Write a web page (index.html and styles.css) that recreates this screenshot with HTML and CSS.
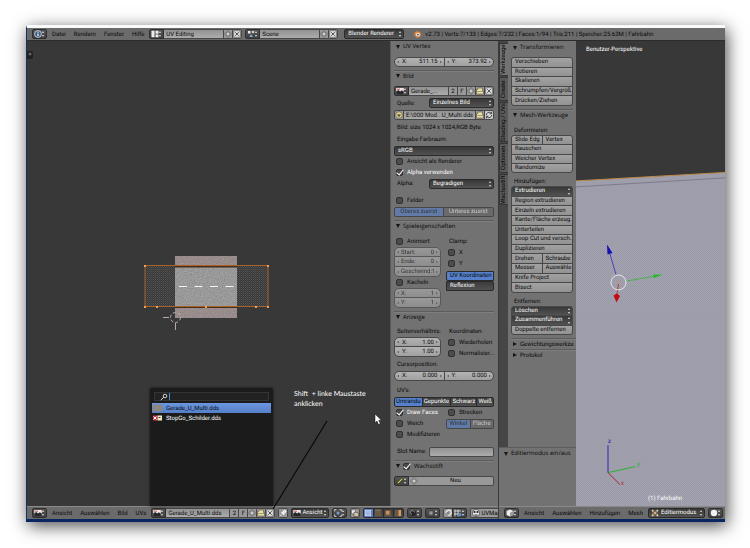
FILE: index.html
```html
<!DOCTYPE html>
<html lang="de">
<head>
    <meta charset="UTF-8">
    <meta name="viewport" content="width=device-width, initial-scale=1.0">
    <title>Blender - UV Editing</title>
    <link rel="stylesheet" href="styles.css">
</head>
<body>
    <!-- Icons -->
    <svg class="sprite" aria-hidden="true">
        <symbol id="i-info" viewBox="0 0 8 8"><circle cx="4" cy="4" r="3.4" fill="#3d5a80" stroke="#dde6f0" stroke-width=".8"/><path d="M4 3.6v2.4M4 1.8v1" stroke="#fff" stroke-width="1.2"/></symbol>
        <symbol id="i-layout" viewBox="0 0 8 8"><path d="M.5 .8h3v6.4h-3zM4.5 .8h3v3h-3zM4.5 4.6h3v2.6h-3z" fill="#eee"/></symbol>
        <symbol id="i-scene" viewBox="0 0 8 8"><path d="M1 1h2.5v2.5H1z" fill="#eee"/><circle cx="6" cy="2" r="1.3" fill="#c9d6b0"/><path d="M2.5 7l1.6-3 1.7 3z" fill="#7fb2e0"/></symbol>
        <symbol id="i-image" viewBox="0 0 8 8"><path d="M.2 1h7.6v6H.2z" fill="#f1e4e2"/><path d="M.2 4.6l2-1.6 2 1.4 1.6-1.2 2 1.6V7H.2z" fill="#26262c"/><path d="M1 2.2h3" stroke="#c04a50" stroke-width=".9"/></symbol>
        <symbol id="i-plus" viewBox="0 0 8 8"><path d="M3.2 1h1.6v2.2H7v1.6H4.8V7H3.2V4.800H1V3.200h2.200z" fill="#eee" stroke="#444" stroke-width=".6"/></symbol>
        <symbol id="i-close" viewBox="0 0 8 8"><rect x=".6" y=".6" width="6.800" height="6.800" rx="2" fill="#ddd" stroke="#444" stroke-width=".5"/><path d="M2.200 2.200l3.600 3.600M5.800 2.200L2.200 5.800" stroke="#444" stroke-width=".9"/></symbol>
        <symbol id="i-folder" viewBox="0 0 8 8"><path d="M.5 7V2.500h1.200L2.200 1h4.300v2.500h1V7z" fill="#e8dfb0" stroke="#554d2d" stroke-width=".6"/><path d="M.5 4.500h7" stroke="#776c3c" stroke-width=".6"/></symbol>
        <symbol id="i-reload" viewBox="0 0 8 8"><rect x=".3" y=".3" width="7.400" height="7.400" fill="#ddd"/><path d="M1.300 4a2.700 2.700 0 0 1 4.700-1.800M6.700 4a2.700 2.700 0 0 1-4.700 1.800M6.500 .8v2h-2M1.500 7.200v-2h2" fill="none" stroke="#333" stroke-width=".9"/></symbol>
        <symbol id="i-pack" viewBox="0 0 8 8"><circle cx="4" cy="4" r="3.300" fill="#d9cf9a" stroke="#5c5530" stroke-width=".6"/><path d="M2 3.500h4L4 6z" fill="#4a4428"/></symbol>
        <symbol id="i-pencil" viewBox="0 0 8 8"><path d="M1 7l.6-1.800L6 1l1 1-4.200 4.300z" fill="#e3d94a" stroke="#222" stroke-width=".5"/></symbol>
        <symbol id="i-pin" viewBox="0 0 8 8"><rect x=".2" y=".2" width="7.600" height="7.600" fill="#999"/><path d="M2.600 3l2.600 2.600M3.600 3.600L5.600 1.400l1.200 1.200-2 2" stroke="#fff" stroke-width="1.200" fill="none"/><path d="M1 7.200l2.600-2.600" stroke="#eee" stroke-width=".8"/></symbol>
        <symbol id="i-pivot" viewBox="0 0 8 8"><path d="M.6 2.400V.6h1.800M5.600 .6h1.800v1.800M7.400 5.600v1.800H5.600M2.400 7.400H.6V5.600" fill="none" stroke="#eee" stroke-width=".8"/><circle cx="4" cy="4" r="1.500" fill="#7c9bc8"/></symbol>
        <symbol id="i-sync" viewBox="0 0 8 8"><path d="M.5 .8h4v4h-4z" fill="#eee" stroke="#444" stroke-width=".5"/><path d="M3 3l4.500 1v3.500H3z" fill="#d6c6a6" stroke="#333" stroke-width=".5"/></symbol>
        <symbol id="i-vert" viewBox="0 0 8 8"><path d="M1 1h6v6H1z" fill="#d4dcec"/><path d="M1 3h6M1 5h6M3 1v6M5 1v6" stroke="#6c85b8" stroke-width=".5"/></symbol>
        <symbol id="i-edge" viewBox="0 0 8 8"><path d="M1 1h6v6H1z" fill="#6a5844"/><path d="M1 1h6" stroke="#95785a"/></symbol>
        <symbol id="i-face" viewBox="0 0 8 8"><path d="M1 1h6v6H1z" fill="#6a5844"/><path d="M2 2h3.500v3.500H2z" fill="#c79255"/></symbol>
        <symbol id="i-island" viewBox="0 0 8 8"><path d="M1 1h6v6H1z" fill="#6a5744"/><path d="M4.500 1H7v6H4.500z" fill="#d99a5a"/></symbol>
        <symbol id="i-snap" viewBox="0 0 8 8"><circle cx="4" cy="4" r="3" fill="#222"/><path d="M3 5.500a2 2 0 1 1 2.500-2" fill="none" stroke="#aaa" stroke-width=".8"/></symbol>
        <symbol id="i-prop" viewBox="0 0 8 8"><circle cx="4" cy="4" r="2.800" fill="#777" stroke="#333" stroke-width=".6"/><circle cx="4" cy="4" r="1.200" fill="#999"/></symbol>
        <symbol id="i-magnet" viewBox="0 0 8 8"><path d="M1.500 3.500L4 1.200a2.400 2.400 0 0 1 3 3.200L4.600 6.800" fill="none" stroke="#eee" stroke-width="1.200"/><circle cx="4" cy="4" r=".8" fill="#666"/></symbol>
        <symbol id="i-incr" viewBox="0 0 8 8"><path d="M1 .5v7M4 .5v7M0 2h7M0 5h7" stroke="#eee" stroke-width=".8"/><circle cx="5.800" cy="5.800" r="1.700" fill="#5b8ad0"/></symbol>
        <symbol id="i-uvmap" viewBox="0 0 8 8"><circle cx="4" cy="4" r="3.600" fill="#eee" stroke="#222" stroke-width=".6"/><circle cx="2.600" cy="3" r="1.100" fill="#222"/><circle cx="5.400" cy="3" r="1.100" fill="#222"/><path d="M2.500 6h3" stroke="#222"/></symbol>
        <symbol id="i-cube" viewBox="0 0 8 8"><path d="M4 .4l3.400 1.600v4L4 7.600.6 6V2z" fill="#eee"/><path d="M4 3.800L7.400 2v4L4 7.600z" fill="#999"/></symbol>
        <symbol id="i-edit" viewBox="0 0 8 8"><path d="M1.500 1.500h5v5h-5z" fill="#8a6d50"/><path d="M.8 .8h1.600v1.600H.8zM5.600 .8h1.600v1.600H5.600zM.8 5.600h1.600v1.600H.8zM5.600 5.600h1.600v1.600H5.600zM3.200 3.200h1.600v1.600H3.200z" fill="#f0dcc0"/></symbol>
        <symbol id="i-sphere" viewBox="0 0 8 8"><circle cx="4" cy="4" r="3.200" fill="#f2f2f2"/></symbol>
        <symbol id="i-blender" viewBox="0 0 8 8"><path d="M.6 4.600L4.200 1.400M1.800 2.800h3" stroke="#e8883a" stroke-width="1"/><circle cx="4.800" cy="4.600" r="2.500" fill="#f4e3d2" stroke="#e8883a" stroke-width="1.100"/><circle cx="4.800" cy="4.600" r=".9" fill="#35558a"/></symbol>
    </svg>

    <div class="window">
        <header class="bar">
            <button class="chip updown" aria-label="Info"><svg><use href="#i-info"/></svg></button>
            <nav class="menu">
                <a href="#">Datei</a>
                <a href="#">Rendern</a>
                <a href="#">Fenster</a>
                <a href="#">Hilfe</a>
            </nav>
            <div class="idblock screen-block">
                <button class="chip updown" aria-label="Layout"><svg><use href="#i-layout"/></svg></button>
                <input type="text" value="UV Editing" aria-label="Bildschirm">
                <button class="light" aria-label="Neu"><svg><use href="#i-plus"/></svg></button>
                <button class="light" aria-label="Entfernen"><svg><use href="#i-close"/></svg></button>
            </div>
            <div class="idblock scene-block">
                <button class="chip updown" aria-label="Szene"><svg><use href="#i-scene"/></svg></button>
                <input type="text" value="Scene" aria-label="Szene">
                <button class="light" aria-label="Neu"><svg><use href="#i-plus"/></svg></button>
                <button class="light" aria-label="Entfernen"><svg><use href="#i-close"/></svg></button>
            </div>
            <span class="select updown engine"><select aria-label="Engine"><option>Blender Renderer</option></select></span>
            <svg class="logo"><use href="#i-blender"/></svg>
            <span class="stats">v2.73 | Verts:7/133 | Edges:7/232 | Faces:1/94 | Tris:211 | Speicher:25.63M | Fahrbahn</span>
        </header>

        <div class="workspace">
            <!-- UV editor -->
            <section class="editor uv-editor">
                <div class="editor-main">
                    <div class="canvas">
                        <button class="expand" aria-label="Werkzeuge einblenden">+</button>
                        <svg class="drawing" width="363" height="467">
                            <defs>
                                <pattern id="dots" width="2" height="2" patternUnits="userSpaceOnUse"><rect width="1" height="1" fill="#666"/><rect x="1" y="1" width="1" height="1" fill="#555"/></pattern>
                                <filter id="grain" x="0" y="0" width="100%" height="100%">
                                    <feTurbulence type="fractalNoise" baseFrequency=".8" numOctaves="2" result="n"/>
                                    <feColorMatrix in="n" values="0 0 0 0 .2  0 0 0 0 .2  0 0 0 0 .2  1.500 0 0 0 -.5"/>
                                    <feComposite operator="in" in2="SourceGraphic"/>
                                    <feMerge><feMergeNode in="SourceGraphic"/><feMergeNode/></feMerge>
                                </filter>
                            </defs>
                            <rect x="118" y="225" width="123" height="41" fill="url(#dots)" opacity=".6"/>
                            <g filter="url(#grain)">
                                <rect x="148" y="215" width="62" height="62" fill="#a29292"/>
                                <rect x="148" y="225" width="62" height="42" fill="#a2a2a2"/>
                            </g>
                            <path d="M152 245.500h57" stroke="#f4f4f4" stroke-width="1.200" stroke-dasharray="8 7.500"/>
                            <path d="M148 225.500h62M148 266h62" stroke="#4a2d18" stroke-width="2"/>
                            <rect x="118" y="224.500" width="123" height="41" fill="none" stroke="#a8622c"/>
                            <path d="M117 224h2v2h-2zM240 224h2v2h-2zM117 265h2v2h-2zM129 265h2v2h-2zM178 265h2v2h-2zM228 265h2v2h-2zM240 265h2v2h-2z" fill="#f0a050"/>
                            <g fill="none" stroke="#b9a9a9">
                                <circle cx="148.500" cy="276.500" r="5" stroke-dasharray="3 2"/>
                                <path d="M136 276.500h6M148.500 282v7"/>
                            </g>
                            <path d="M300 380L246 468" stroke="#080808" stroke-width="1.200"/>
                            <path d="M348 373v9l2-2 1.500 3.500 1.800-.8-1.500-3.400h2.700z" fill="#fff" stroke="#111" stroke-width=".5"/>
                        </svg>
                        <p class="note">Shift&nbsp; + linke Maustaste<br>anklicken</p>
                        <div class="popup">
                            <label class="search">
                                <svg viewBox="0 0 8 8"><circle cx="5" cy="3" r="1.800" fill="none" stroke="#ddd" stroke-width=".9"/><path d="M.8 7l3-2.800" stroke="#ddd"/></svg>
                                <span class="caret"></span>
                                <input type="text" aria-label="Suchen">
                            </label>
                            <button class="item active"><svg viewBox="0 0 9 7"><rect width="9" height="7" fill="#8d8580"/></svg>Gerade_U_Multi.dds</button>
                            <button class="item"><svg viewBox="0 0 9 7"><path d="M0 1h4.500v5H0z" fill="#d0313c"/><path d="M.5 2l3 3M3.500 2l-3 3" stroke="#fff"/><path d="M4.500 1H9v5H4.500z" fill="#efe9c4"/><path d="M5.500 3h2" stroke="#444"/></svg>StopGo_Schilder.dds</button>
                        </div>
                    </div>

                    <aside class="props">
                        <section class="panel">
                            <h2>UV Vertex</h2>
                            <div class="row group">
                                <label class="num">X:<input value="511.15"></label>
                                <label class="num">Y:<input value="373.92"></label>
                            </div>
                        </section>

                        <section class="panel">
                            <h2>Bild</h2>
                            <div class="row tall">
                                <div class="idblock">
                                    <button class="chip updown" aria-label="Bild"><svg><use href="#i-image"/></svg></button>
                                    <input type="text" value="Gerade_..." aria-label="Bildname">
                                    <button class="light">2</button>
                                    <button class="light">F</button>
                                    <button class="light" aria-label="Neu"><svg><use href="#i-plus"/></svg></button>
                                    <button class="light" aria-label="Öffnen"><svg><use href="#i-folder"/></svg></button>
                                    <button class="light" aria-label="Entfernen"><svg><use href="#i-close"/></svg></button>
                                </div>
                            </div>
                            <div class="row tall">
                                <label class="caption" for="source">Quelle:</label>
                                <span class="select updown"><select id="source"><option>Einzelnes Bild</option></select></span>
                            </div>
                            <div class="row tall">
                                <div class="idblock">
                                    <button class="light" aria-label="Packen"><svg><use href="#i-pack"/></svg></button>
                                    <input type="text" value="E:\000 Mod...U_Multi.dds" aria-label="Pfad">
                                    <button class="light" aria-label="Öffnen"><svg><use href="#i-folder"/></svg></button>
                                    <button class="light" aria-label="Neu laden"><svg><use href="#i-reload"/></svg></button>
                                </div>
                            </div>
                            <p class="row tall text">Bild: size 1024 x 1024,RGB Byte</p>
                            <label class="row tall text" for="space">Eingabe Farbraum:</label>
                            <div class="row">
                                <span class="select updown"><select id="space"><option>sRGB</option></select></span>
                            </div>
                            <label class="row check"><input type="checkbox">Ansicht als Renderer</label>
                            <label class="row check"><input type="checkbox" checked>Alpha verwenden</label>
                            <div class="row">
                                <label class="caption" for="alpha">Alpha:</label>
                                <span class="select updown"><select id="alpha"><option>Begradigen</option></select></span>
                            </div>
                            <label class="row check spaced"><input type="checkbox">Felder</label>
                            <div class="row group toggles faded">
                                <button class="on">Oberes zuerst</button>
                                <button>Unteres zuerst</button>
                            </div>
                        </section>

                        <section class="panel">
                            <h2>Spieleigenschaften</h2>
                            <div class="columns">
                                <div>
                                    <label class="row tall check"><input type="checkbox">Animiert</label>
                                    <div class="stack faded">
                                        <label class="num">Start:<input value="0"></label>
                                        <label class="num">Ende:<input value="0"></label>
                                        <label class="num">Geschwind:<input value="1"></label>
                                    </div>
                                    <label class="row check"><input type="checkbox">Kacheln</label>
                                    <div class="stack faded">
                                        <label class="num">X:<input value="1"></label>
                                        <label class="num">Y:<input value="1"></label>
                                    </div>
                                </div>
                                <div>
                                    <p class="row tall text">Clamp:</p>
                                    <label class="row check"><input type="checkbox">X</label>
                                    <label class="row check"><input type="checkbox">Y</label>
                                    <div class="stack toggles mapping">
                                        <button class="on">UV Koordinaten</button>
                                        <button>Reflexion</button>
                                    </div>
                                </div>
                            </div>
                        </section>

                        <section class="panel">
                            <h2>Anzeige</h2>
                            <div class="columns">
                                <div>
                                    <p class="row text">Seitenverhältnis:</p>
                                    <div class="stack">
                                        <label class="num">X:<input value="1.00"></label>
                                        <label class="num">Y:<input value="1.00"></label>
                                    </div>
                                </div>
                                <div>
                                    <p class="row text">Koordinaten:</p>
                                    <label class="row check"><input type="checkbox">Wiederholen</label>
                                    <label class="row check"><input type="checkbox">Normalisier...</label>
                                </div>
                            </div>
                            <p class="row text">Cursorposition:</p>
                            <div class="row group">
                                <label class="num">X:<input value="0.000"></label>
                                <label class="num">Y:<input value="0.000"></label>
                            </div>
                            <p class="row text uvs">UV's:</p>
                            <div class="row group toggles">
                                <button class="on">Umrandu</button>
                                <button>Gepunkte</button>
                                <button>Schwarz</button>
                                <button>Weiß</button>
                            </div>
                            <div class="columns">
                                <div>
                                    <label class="row check"><input type="checkbox" checked>Draw Faces</label>
                                    <label class="row check"><input type="checkbox">Weich</label>
                                    <label class="row check"><input type="checkbox">Modifizieren</label>
                                </div>
                                <div>
                                    <label class="row check"><input type="checkbox">Strecken</label>
                                    <div class="row group toggles faded">
                                        <button class="on">Winkel</button>
                                        <button>Fläche</button>
                                    </div>
                                </div>
                            </div>
                            <div class="row spaced">
                                <label class="caption" for="slot">Slot Name:</label>
                                <input class="field" id="slot" type="text">
                            </div>
                        </section>

                        <section class="panel">
                            <h2><label class="check"><input type="checkbox" checked>Wachsstift</label></h2>
                            <div class="row">
                                <div class="idblock">
                                    <button class="chip updown" aria-label="Wachsstift"><svg><use href="#i-pencil"/></svg></button>
                                    <button class="light new"><svg><use href="#i-plus"/></svg><span>Neu</span></button>
                                </div>
                            </div>
                        </section>
                    </aside>
                </div>

                <footer class="bar">
                    <button class="chip updown" aria-label="UV/Bildeditor"><svg><use href="#i-image"/></svg></button>
                    <nav class="menu">
                        <a href="#">Ansicht</a>
                        <a href="#">Auswählen</a>
                        <a href="#">Bild</a>
                        <a href="#">UVs</a>
                    </nav>
                    <div class="idblock image-block">
                        <button class="chip updown" aria-label="Bild"><svg><use href="#i-image"/></svg></button>
                        <input type="text" value="Gerade_U_Multi.dds" aria-label="Bildname">
                        <button class="light">2</button>
                        <button class="light">F</button>
                        <button class="light" aria-label="Neu"><svg><use href="#i-plus"/></svg></button>
                        <button class="light" aria-label="Öffnen"><svg><use href="#i-folder"/></svg></button>
                        <button class="light" aria-label="Entfernen"><svg><use href="#i-close"/></svg></button>
                    </div>
                    <button class="light" aria-label="Anheften"><svg><use href="#i-pin"/></svg></button>
                    <span class="select updown view-mode"><svg><use href="#i-image"/></svg><select aria-label="Modus"><option>Ansicht</option></select></span>
                    <button class="chip updown" aria-label="Pivot"><svg><use href="#i-pivot"/></svg></button>
                    <button class="light" aria-label="Auswahl synchronisieren"><svg><use href="#i-sync"/></svg></button>
                    <div class="group toggles icons">
                        <button class="on" aria-label="Punkt"><svg><use href="#i-vert"/></svg></button>
                        <button aria-label="Kante"><svg><use href="#i-edge"/></svg></button>
                        <button aria-label="Fläche"><svg><use href="#i-face"/></svg></button>
                        <button aria-label="Insel"><svg><use href="#i-island"/></svg></button>
                    </div>
                    <button class="chip updown" aria-label="Sticky"><svg><use href="#i-snap"/></svg></button>
                    <button class="chip updown" aria-label="Proportional"><svg><use href="#i-prop"/></svg></button>
                    <div class="idblock">
                        <button class="light" aria-label="Einrasten"><svg><use href="#i-magnet"/></svg></button>
                        <button class="chip updown" aria-label="Einrastelement"><svg><use href="#i-incr"/></svg></button>
                    </div>
                    <button class="light uvmap"><svg><use href="#i-uvmap"/></svg>UVMap</button>
                </footer>
            </section>

            <!-- 3D view -->
            <section class="editor view-editor">
                <div class="editor-main">
                    <div class="shelf">
                        <div class="shelf-main">
                            <nav class="tabs">
                                <a href="#" class="active t-tools">Werkzeuge</a>
                                <a href="#" class="t-create">Create</a>
                                <a href="#" class="t-shading">Shading / UVs</a>
                                <a href="#" class="t-options">Optionen</a>
                                <a href="#" class="t-grease">Wachsstift</a>
                            </nav>
                            <aside class="tools">
                                <section class="panel">
                                    <h2>Transformieren</h2>
                                    <div class="buttons n5">
                                        <button>Verschieben</button>
                                        <button>Rotieren</button>
                                        <button>Skalieren</button>
                                        <button>Schrumpfen/Vergröß...</button>
                                        <button>Drücken/Ziehen</button>
                                    </div>
                                </section>
                                <section class="panel">
                                    <h2>Mesh-Werkzeuge</h2>
                                    <p class="row text">Deformieren:</p>
                                    <div class="buttons n4">
                                        <div class="pair"><button>Slide Edg</button><button>Vertex</button></div>
                                        <button>Rauschen</button>
                                        <button>Weicher Vertex</button>
                                        <button>Randomize</button>
                                    </div>
                                    <p class="row text">Hinzufügen:</p>
                                    <div class="buttons n11">
                                        <span class="select updown"><select aria-label="Extrudieren"><option>Extrudieren</option></select></span>
                                        <button>Region extrudieren</button>
                                        <button>Einzeln extrudieren</button>
                                        <button>Kante/Fläche erzeug...</button>
                                        <button>Unterteilen</button>
                                        <button>Loop Cut und versch...</button>
                                        <button>Duplizieren</button>
                                        <div class="pair"><button>Drehen</button><button>Schraube</button></div>
                                        <div class="pair"><button>Messer</button><button>Auswähle</button></div>
                                        <button>Knife Project</button>
                                        <button>Bisect</button>
                                    </div>
                                    <p class="row text">Entfernen:</p>
                                    <div class="buttons n3">
                                        <span class="select updown"><select aria-label="Löschen"><option>Löschen</option></select></span>
                                        <span class="select updown"><select aria-label="Zusammenführen"><option>Zusammenführen</option></select></span>
                                        <button>Doppelte entfernen</button>
                                    </div>
                                </section>
                                <section class="panel closed"><h2>Gewichtungswerkze</h2></section>
                                <section class="panel closed"><h2>Protokol</h2></section>
                            </aside>
                        </div>
                        <section class="panel operator">
                            <h2>Editiermodus ein/aus</h2>
                        </section>
                    </div>
                    <div class="viewport">
                        <svg class="scene" viewBox="0 0 149 467" preserveAspectRatio="none">
                            <defs>
                                <pattern id="mesh" width="2" height="2" patternUnits="userSpaceOnUse"><rect width="2" height="2" fill="#a4a4b0"/><rect width="1" height="1" fill="#9696a6"/><rect x="1" y="1" width="1" height="1" fill="#9b9ba9"/></pattern>
                            </defs>
                            <path d="M0 140.500L149 132v335H0z" fill="url(#mesh)"/>
                            <path d="M0 140.500L149 132" stroke="#c08a48"/>
                            <path d="M0 146.500L149 137.500" stroke="#6c6c7c" stroke-width=".7"/>
                            <path d="M40 234.500L34 214" stroke="#3a3ab8" stroke-width=".9"/>
                            <path d="M31 204.500l5.500 8.500-5 1.500z" fill="#1212b4"/>
                            <path d="M51 241l26-4.500" stroke="#3cb440" stroke-width=".9"/>
                            <path d="M86.500 234.500l-9.500 0 .8 3.800z" fill="#28b82c"/>
                            <path d="M42.500 244l-1.500 10" stroke="#b03038" stroke-width=".9"/>
                            <path d="M37.500 255.500l3.500-2 3 2.500-3.500 6.500z" fill="#c40c10"/>
                            <circle cx="42.500" cy="242.500" r="7.500" fill="none" stroke="#eee" stroke-width=".9"/>
                            <circle cx="42.500" cy="242.500" r="1" fill="#e09040"/>
                            <path d="M32 433.500V406" stroke="#2424b0"/>
                            <path d="M32 433.500l27-6" stroke="#28b030"/>
                            <path d="M32 433.500l12 12" stroke="#a8202c"/>
                            <text x="32" y="404" fill="#2424b0">z</text>
                            <text x="61" y="427" fill="#28b030">y</text>
                            <text x="45" y="446" fill="#a8202c">x</text>
                        </svg>
                        <span class="persp">Benutzer-Perspektive</span>
                        <span class="object-name">(1) Fahrbahn</span>
                    </div>
                </div>
                <footer class="bar">
                    <button class="chip updown" aria-label="3D-Ansicht"><svg><use href="#i-cube"/></svg></button>
                    <nav class="menu">
                        <a href="#">Ansicht</a>
                        <a href="#">Auswählen</a>
                        <a href="#">Hinzufügen</a>
                        <a href="#">Mesh</a>
                    </nav>
                    <span class="select updown edit-mode"><svg><use href="#i-edit"/></svg><select aria-label="Modus"><option>Editiermodus</option></select></span>
                    <button class="chip updown" aria-label="Schattierung"><svg><use href="#i-sphere"/></svg></button>
                    <button class="chip updown" aria-label="Pivot"><svg><use href="#i-sphere"/></svg></button>
                </footer>
            </section>
        </div>
    </div>
</body>
</html>
```
FILE: styles.css
```css
* {
    box-sizing: border-box;
}
body {
    margin: 0;
    padding: 25px 25px 25px 26px;
    background: #fff;
    font-family: Roboto, "DejaVu Sans", sans-serif;
    font-size: 6px;
    line-height: 9px;
    color: #080808;
    text-rendering: geometricPrecision;
}
button, input, select {
    font: inherit;
    color: inherit;
    text-rendering: inherit;
    margin: 0;
    padding: 0;
    border: 0;
    background: none;
    min-width: 0;
}
a {
    color: inherit;
    text-decoration: none;
}
p, h2 {
    margin: 0;
    font-size: inherit;
    font-weight: normal;
}
svg {
    width: 8px;
    height: 8px;
    flex: none;
    display: block;
}
.sprite {
    position: absolute;
    width: 0;
    height: 0;
}

/* Window frame */
.window {
    border-top: 3px solid #fafafa;
    border-left: 1px solid #14305f;
    border-bottom: 3px solid #0a2560;
    box-shadow: 2px 4px 16px rgba(0, 0, 0, 0.7);
    background: #383838;
}
.workspace {
    display: flex;
}
.editor {
    display: flex;
    flex-direction: column;
    min-width: 0;
}
.uv-editor {
    flex: 1;
}
.view-editor {
    width: 227px;
    border-left: 1px solid #3a3a3a;
}
.editor-main {
    display: flex;
    flex: 1;
}

/* Header bars */
.bar {
    display: flex;
    align-items: center;
    gap: 3px;
    height: 13px;
    padding-left: 5px;
    background: #6b6b6b;
    border-bottom: 1px solid #2c2c2c;
    overflow: hidden;
    white-space: nowrap;
}
footer.bar {
    border-top: 1px solid #8a8a8a;
    border-bottom: 0;
}
.menu {
    display: flex;
    gap: 8px;
    padding: 0 2px;
}
.logo {
    margin-left: 6px;
}
.stats {
    margin-left: 1px;
}

/* Buttons and fields */
.updown {
    position: relative;
}
.updown::before, .updown::after {
    content: "";
    position: absolute;
    right: 2px;
    border: 1px solid transparent;
    pointer-events: none;
}
.updown::before {
    top: 0;
    border-bottom: 2px solid #ddd;
}
.updown::after {
    bottom: 0;
    border-top: 2px solid #ddd;
}
.chip {
    display: flex;
    align-items: center;
    flex: none;
    width: 15px;
    height: 10px;
    padding-left: 1px;
    background: linear-gradient(#555, #404040);
    border: 1px solid #2e2e2e;
    border-radius: 2px;
}
.light {
    display: flex;
    align-items: center;
    justify-content: center;
    flex: none;
    width: 10px;
    height: 10px;
    background: #999;
    border: 1px solid #484848;
    border-radius: 2px;
}
.idblock {
    display: flex;
    flex: 1;
    min-width: 0;
}
.bar .idblock {
    flex: none;
}
.idblock > * {
    border-radius: 0;
    margin-left: -1px;
}
.idblock > :first-child {
    margin-left: 0;
    border-radius: 2px 0 0 2px;
}
.idblock > :last-child {
    border-radius: 0 2px 2px 0;
}
.idblock input {
    flex: 1;
    height: 10px;
    padding: 0 2px;
    background: linear-gradient(#929292, #acacac);
    border: 1px solid #484848;
}
.screen-block {
    width: 93px;
}
.scene-block {
    width: 93px;
}
.image-block {
    width: 124px;
}
.select {
    display: flex;
    align-items: center;
    flex: 1;
    min-width: 0;
    height: 10px;
    padding: 0 3px;
    color: #fff;
    background: linear-gradient(#383838, #525252);
    border: 1px solid #2a2a2a;
    border-radius: 2px;
}
.select select {
    appearance: none;
    width: 100%;
    height: 8px;
    line-height: 8px;
    outline: 0;
}
.engine {
    flex: none;
    width: 60px;
    margin-left: 3px;
}
.view-mode {
    flex: none;
    width: 38px;
    padding: 0 1px;
    gap: 1px;
}
.edit-mode {
    flex: none;
    width: 57px;
    padding-left: 2px;
    gap: 2px;
}
.uvmap {
    width: 48px;
    justify-content: flex-start;
    gap: 1px;
    padding-left: 1px;
}
.field {
    flex: 1;
    height: 10px;
    background: linear-gradient(#929292, #acacac);
    border: 1px solid #484848;
    border-radius: 2px;
}

/* Panels */
.props {
    width: 108px;
    background: #727272;
    border-left: 1px solid #5a5a5a;
    padding: 0 4px 17px 3px;
}
.panel {
    padding-bottom: 3px;
}
.panel + .panel {
    border-top: 1px solid #5c5c5c;
    box-shadow: inset 0 1px #7e7e7e;
}
.panel h2 {
    display: flex;
    align-items: center;
    gap: 3px;
    height: 11px;
    margin-bottom: 4px;
    padding-left: 2px;
    font-family: "Open Sans", "DejaVu Sans", sans-serif;
    white-space: nowrap;
}
.panel + .panel h2 {
    height: 10px;
}
.panel h2::before {
    content: "";
    border: 2px solid transparent;
    border-top: 4px solid #161616;
    border-bottom: 0;
}
.panel.closed h2::before {
    border: 2px solid transparent;
    border-left: 4px solid #161616;
    border-right: 0;
}
.row {
    display: flex;
    align-items: center;
    height: 11px;
    white-space: nowrap;
}
.tall {
    height: 12px;
}
.spaced {
    margin-top: 6px;
}
.text {
    padding-left: 3px;
}
.caption {
    width: 35px;
    padding-left: 3px;
}
.check {
    display: flex;
    align-items: center;
    gap: 4px;
    padding-left: 2px;
}
.check:has(:checked) {
    color: #fff;
}
h2 .check {
    padding: 0;
}
h2 .check:has(:checked) {
    color: #080808;
}
.check input {
    appearance: none;
    position: relative;
    width: 7px;
    height: 7px;
    background: #4c4c4c;
    border: 1px solid #303030;
    border-radius: 2px;
}
.check input:checked::after {
    content: "";
    position: absolute;
    left: 1px;
    top: -2px;
    width: 3px;
    height: 6px;
    border: solid #fff;
    border-width: 0 1px 1px 0;
    transform: rotate(40deg);
}
.columns {
    display: grid;
    grid-template-columns: 47px 1fr;
    gap: 5px;
}
.num {
    display: flex;
    align-items: center;
    flex: 1;
    min-width: 0;
    height: 10px;
    padding: 0 2px;
    background: linear-gradient(#b4b4b4, #a0a0a0);
    border: 1px solid #484848;
}
.num::before, .num::after {
    content: "";
    flex: none;
    border: 1px solid transparent;
}
.num::before {
    border-right: 2px solid #555;
    border-left: 0;
    margin-right: 3px;
}
.num::after {
    border-left: 2px solid #555;
    border-right: 0;
    margin-left: 2px;
}
.num input {
    flex: 1;
    width: 4px;
    text-align: right;
}
.group > * + * {
    margin-left: -1px;
}
.group .num:first-child {
    border-radius: 5px 0 0 5px;
}
.group .num:last-child {
    border-radius: 0 5px 5px 0;
}
.stack {
    display: flex;
    flex-direction: column;
}
.stack .num {
    flex: none;
}
.stack .num + .num {
    border-top: 0;
}
.stack .num:first-child {
    border-radius: 5px 5px 0 0;
}
.stack .num:last-child {
    border-radius: 0 0 5px 5px;
}
.stack.faded .num::before {
    margin-right: 2px;
}
.toggles button {
    flex: 1 1 auto;
    height: 10px;
    line-height: 8px;
    color: #fff;
    background: linear-gradient(#3c3c3c, #505050);
    border: 1px solid #2a2a2a;
    white-space: nowrap;
}
.toggles .on {
    color: #080808;
    background: #5680cc;
}
.toggles button:first-child {
    border-radius: 2px 0 0 2px;
}
.toggles button:last-child {
    border-radius: 0 2px 2px 0;
}
.faded {
    opacity: 0.6;
}
.faded.toggles button:not(.on) {
    background: #666;
}
.mapping {
    margin-top: 2px;
}
.mapping button {
    flex: none;
    padding-left: 3px;
    text-align: left;
}
.uvs {
    margin-top: 4px;
}
.icons {
    display: flex;
}
.icons button {
    width: 11px;
    flex: none;
}
.idblock .new {
    flex: 1;
    padding-left: 1px;
}
.new span {
    flex: 1;
}

/* UV canvas */
.canvas {
    position: relative;
    flex: 1;
    background: #383838;
}
.drawing {
    position: absolute;
    left: 0;
    top: 0;
    width: 363px;
    height: 467px;
    overflow: visible;
    z-index: 2;
    pointer-events: none;
}
.expand {
    position: absolute;
    left: 0;
    top: 10px;
    width: 6px;
    height: 8px;
    line-height: 8px;
    color: #aaa;
    background: #222;
    border-radius: 0 2px 2px 0;
}
.note {
    position: absolute;
    left: 267px;
    top: 348px;
    font-family: Lato, sans-serif;
    font-size: 7px;
    line-height: 10px;
    color: #fff;
    white-space: nowrap;
}
.popup {
    position: absolute;
    left: 123px;
    bottom: 0;
    width: 123px;
    height: 118px;
    padding: 4px 2px;
    background: #1b1b1b;
    border-radius: 2px 2px 0 0;
    box-shadow: 0 0 3px #111;
}
.search {
    display: flex;
    align-items: center;
    height: 9px;
    margin: 0 2px 2px;
    padding-left: 5px;
    background: #222;
    border: 1px solid #343434;
}
.search input {
    flex: 1;
    color: #ddd;
}
.caret {
    width: 1px;
    height: 7px;
    margin-left: 1px;
    background: #4a8ac8;
}
.item {
    display: flex;
    align-items: center;
    gap: 4px;
    width: 100%;
    height: 10px;
    padding-left: 1px;
    color: #fff;
    text-align: left;
}
.item svg {
    width: 9px;
}
.item.active {
    color: #080808;
    background: linear-gradient(#6c97e0, #5580c8);
}

/* Tool shelf */
.shelf {
    display: flex;
    flex-direction: column;
    width: 77px;
    background: #727272;
}
.shelf-main {
    display: flex;
    flex: 1;
}
.tabs {
    display: flex;
    flex-direction: column;
    gap: 1px;
    width: 9px;
    padding-top: 2px;
    background: #464646;
}
.tabs a {
    writing-mode: vertical-rl;
    transform: rotate(180deg);
    text-align: center;
    background: #5a5a5a;
    border: 1px solid #363636;
    border-left-width: 0;
    border-radius: 0 2px 2px 0;
    line-height: 8px;
    white-space: nowrap;
}
.tabs .active {
    background: #727272;
}
.t-tools {
    height: 33px;
}
.t-create {
    height: 24px;
}
.t-shading {
    height: 40px;
}
.t-options {
    height: 30px;
}
.t-grease {
    height: 31px;
}
.tools {
    flex: 1;
    min-width: 0;
    padding: 1px 3px 0;
}
.tools .closed {
    padding: 0;
    margin-right: -3px;
}
.tools .closed h2 {
    margin-bottom: 0;
    font-family: Roboto, "DejaVu Sans", sans-serif;
}
.operator {
    height: 59px;
    border-top: 1px solid #5c5c5c;
    padding-left: 3px;
}
.buttons {
    display: grid;
    grid-auto-rows: 1fr;
    border: 1px solid #484848;
    border-radius: 3px;
    background: #484848;
    row-gap: 1px;
    overflow: hidden;
}
.n3 {
    height: 29px;
}
.n4 {
    height: 38px;
}
.n5 {
    height: 49px;
}
.n11 {
    height: 107px;
}
.buttons button {
    min-height: 0;
    padding-left: 3px;
    line-height: 8px;
    text-align: left;
    white-space: nowrap;
    background: linear-gradient(#a2a2a2, #929292);
}
.buttons .select {
    height: auto;
    border: 0;
    border-radius: 0;
}
.pair {
    display: grid;
    grid-template-columns: 1fr 1fr;
    column-gap: 1px;
}
.tools .text {
    align-items: flex-end;
    margin-top: 2px;
}
.tools h2 + .text {
    margin-top: 0;
}

/* 3D viewport */
.viewport {
    position: relative;
    flex: 1;
    background: #383838;
    color: #fff;
}
.scene {
    position: absolute;
    width: 100%;
    height: 100%;
}
.persp {
    position: absolute;
    left: 10px;
    top: 4px;
}
.object-name {
    position: absolute;
    left: 72px;
    bottom: 3px;
}
```
